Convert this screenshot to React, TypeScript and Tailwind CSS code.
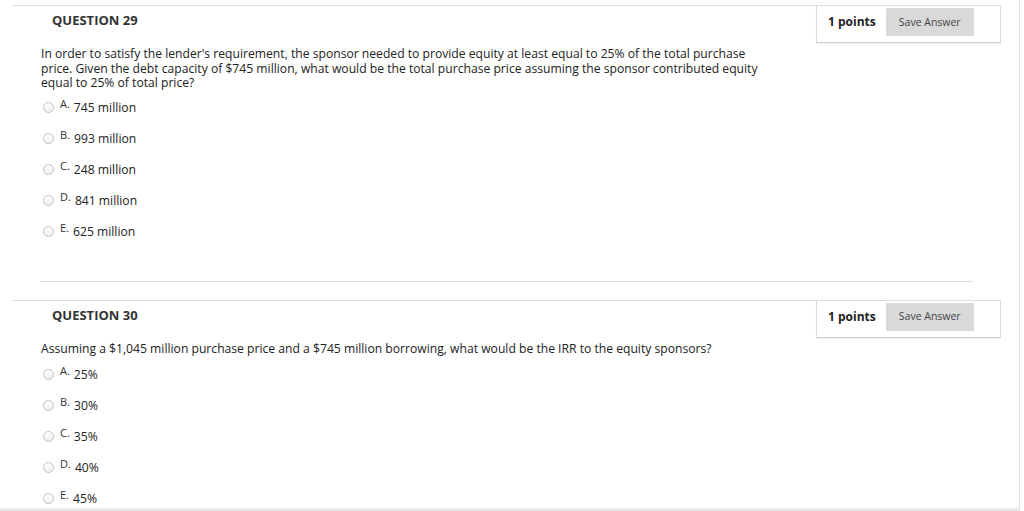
import React from "react";

type Opt = { l: string; t: string };

function Radio() {
  return (
    <span className="mt-[5px] block w-[11px] h-[11px] shrink-0 rounded-full border border-[#c2c2c2] bg-gradient-to-b from-white to-[#eeeeee]" />
  );
}

function Option({ o }: { o: Opt }) {
  return (
    <div className="flex items-start h-[31px]">
      <Radio />
      <span className="ml-[6px] text-[11px] leading-[13px] text-[#333]">{o.l}</span>
      <span className="ml-[4px] mt-[4px] text-[12.15px] leading-[1.2] text-[#222]">{o.t}</span>
    </div>
  );
}

function Question({ n, text, opts, optsClass }: { n: number; text: string; opts: Opt[]; optsClass: string }) {
  return (
    <div className="w-[988px] border-t border-[#dedede]">
      <div className="flex justify-between items-start h-[37px]">
        <div className="pl-[39px] pt-[5px] text-[13px] leading-[18px] font-bold text-[#333]">
          QUESTION {n}
        </div>
        <div className="w-[185px] h-[37px] border-x border-b border-[#dadada] border-b-[#cfcfcf] shadow-[0_1px_1px_rgba(0,0,0,0.05)] flex items-start pt-[2px] pl-[11px]">
          <span className="h-[28px] leading-[28px] text-[12px] font-bold text-[#222]">1 points</span>
          <span className="ml-[10px] w-[88px] h-[28px] pt-[1px] bg-[#d9d9d9] rounded-[1px] flex items-center justify-center text-[10.5px] text-[#444]">
            Save Answer
          </span>
        </div>
      </div>
      <div className="mt-[4px] ml-[28px] w-[727px] text-[12.15px] leading-[1.2] text-[#222]">{text}</div>
      <div className={optsClass}>
        {opts.map((o) => (
          <Option key={o.l} o={o} />
        ))}
      </div>
    </div>
  );
}

export default function App() {
  return (
    <div className="relative w-[1024px] h-[511px] overflow-hidden bg-white flex font-['Open_Sans',sans-serif]">
      <div className="w-[1020px] h-full border-r border-[#e2e2e2] pt-[5px] pl-[13px]">
        <Question
          n={29}
          optsClass="mt-[6px] ml-[30px]"
          text="In order to satisfy the lender's requirement, the sponsor needed to provide equity at least equal to 25% of the total purchase price. Given the debt capacity of $745 million, what would be the total purchase price assuming the sponsor contributed equity equal to 25% of total price?"
          opts={[
            { l: "A.", t: "745 million" },
            { l: "B.", t: "993 million" },
            { l: "C.", t: "248 million" },
            { l: "D.", t: "841 million" },
            { l: "E.", t: "625 million" },
          ]}
        />
        <div className="mt-[29px] ml-[27px] w-[933px] h-px bg-[#dcdcdc]" />
        <div className="mt-[18px]">
          <Question
            n={30}
            optsClass="mt-[8px] ml-[30px]"
            text="Assuming a $1,045 million purchase price and a $745 million borrowing, what would be the IRR to the equity sponsors?"
            opts={[
              { l: "A.", t: "25%" },
              { l: "B.", t: "30%" },
              { l: "C.", t: "35%" },
              { l: "D.", t: "40%" },
              { l: "E.", t: "45%" },
            ]}
          />
        </div>
      </div>
      <div className="absolute left-0 bottom-0 w-[1020px] h-[3px] bg-gradient-to-b from-[#eeeeee] to-[#e2e2e2]" />
    </div>
  );
}
